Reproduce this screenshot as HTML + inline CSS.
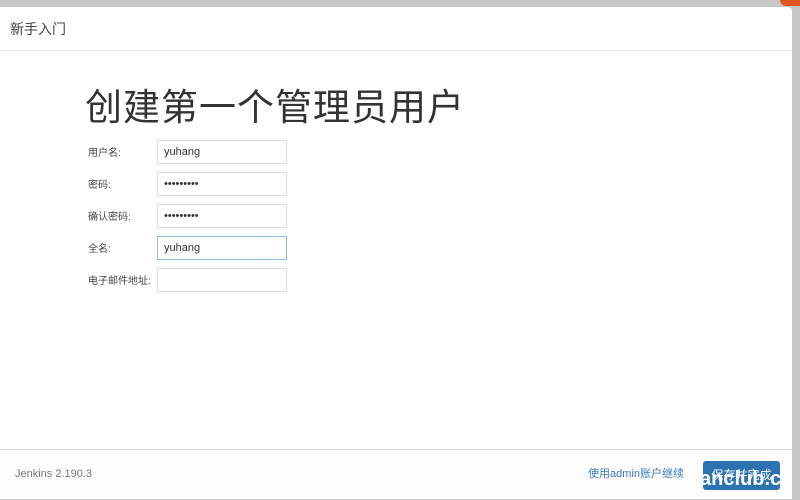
<!DOCTYPE html>
<html><head><meta charset="utf-8"><style>
body{margin:0;width:800px;height:500px;background:#c8c8c8;position:relative;overflow:hidden;font-family:"Liberation Sans","Noto Sans CJK SC",sans-serif;}
.dlg{position:absolute;left:0;top:7px;width:792px;height:491px;background:#fff;border-radius:0 4px 4px 0;}
.hd{height:43px;border-bottom:1px solid #e5e5e5;font-size:14px;color:#444;line-height:44px;padding-left:10px;}
h1{position:absolute;left:85px;top:70px;margin:0;font-size:37px;font-weight:normal;color:#333;letter-spacing:1px;}
.lb{position:absolute;left:88px;font-size:10px;color:#444;}
.in{position:absolute;left:157px;font-size:11px;color:#333;line-height:22px;padding-left:6px;box-sizing:border-box;width:130px;height:24px;border:1px solid #ddd;}
.ft{position:absolute;left:0;top:442px;width:792px;height:49px;border-top:1px solid #ddd;background:#fdfdfd;}
.ver{position:absolute;left:15px;top:18px;font-size:11px;color:#777;}
.lk{position:absolute;left:588px;top:15px;font-size:11px;color:#3a7cb8;}
.bt{position:absolute;left:703px;top:11px;width:77px;height:29px;background:#2b73b0;border-radius:3px;color:#fff;font-size:12px;line-height:29px;text-align:center;}
.wm{position:absolute;left:700px;top:468px;color:#fff;font-size:20px;font-weight:bold;}
</style></head><body>
<div class="dlg">
<div class="hd">新手入门</div>
<h1>创建第一个管理员用户</h1>
<div class="lb" style="top:137px">用户名:</div><div class="in" style="top:133px">yuhang</div>
<div class="lb" style="top:169px">密码:</div><div class="in" style="top:165px">•••••••••</div>
<div class="lb" style="top:201px">确认密码:</div><div class="in" style="top:197px">•••••••••</div>
<div class="lb" style="top:233px">全名:</div><div class="in" style="top:229px;border-color:#8bbbe0">yuhang</div>
<div class="lb" style="top:265px">电子邮件地址:</div><div class="in" style="top:261px"></div>
<div class="ft"><div class="ver">Jenkins 2.190.3</div><div class="lk">使用admin账户继续</div><div class="bt">保存并完成</div></div>
</div>
<div style="position:absolute;right:0;top:0;width:20px;height:6px;background:#e0561e;border-radius:0 0 0 8px"></div>
<div class="wm">anclub.c</div>
</body></html>
